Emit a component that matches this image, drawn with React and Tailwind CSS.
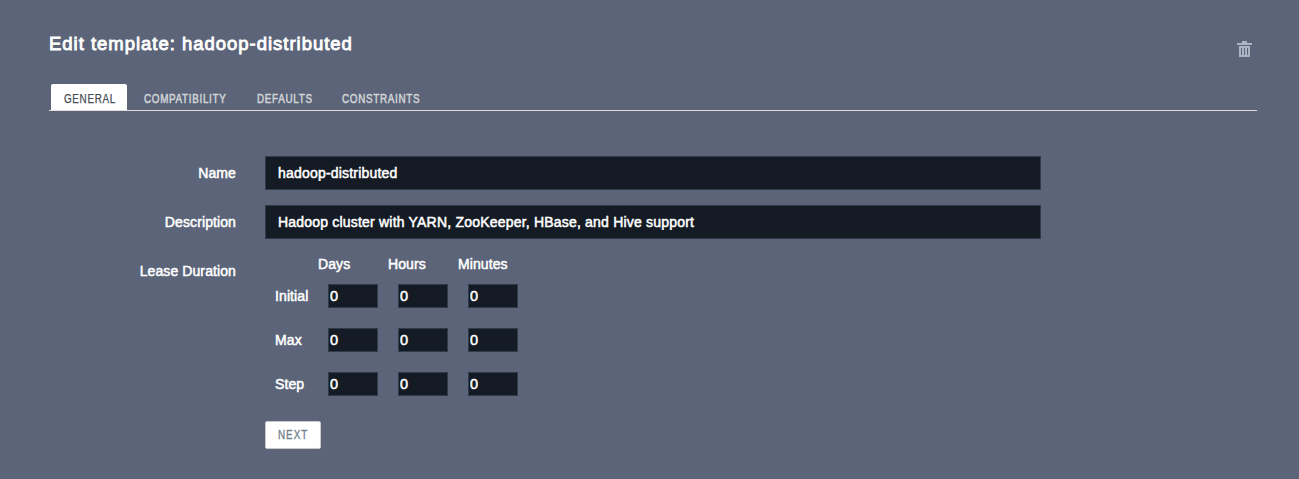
const tabs = [
  { label: "COMPATIBILITY", style: "ml-[17px] w-[83px]" },
  { label: "DEFAULTS", style: "ml-[30px] w-[55px]" },
  { label: "CONSTRAINTS", style: "ml-[30px] w-[77px]" },
];

function Condensed({ children }) {
  return <span className="inline-block origin-left scale-x-[0.82] whitespace-nowrap">{children}</span>;
}

function TrashIcon() {
  return (
    <svg width="15" height="16" viewBox="0 0 15 16" fill="#aab5c1" shapeRendering="crispEdges">
      <path d="M5 0h5v2h5v2H0V2h5z" />
      <path fillRule="evenodd" d="M2 5h11v11H2zM4 7v7h1V7zM7 7v7h1V7zM10 7v7h1V7z" />
    </svg>
  );
}

function Field({ label, value }) {
  return (
    <div className="flex h-[34px] items-center">
      <label className="w-[187px] text-right">{label}</label>
      <input
        defaultValue={value}
        className="ml-[29px] h-[34px] w-[776px] border border-[#303b4a] bg-[#141b24] px-3 tracking-[0.2px] outline-none"
      />
    </div>
  );
}

function LeaseRow({ label }) {
  return (
    <div className="flex h-6 items-center">
      <span className="w-[53px]">{label}</span>
      <div className="flex gap-5">
        {["Days", "Hours", "Minutes"].map((unit) => (
          <input
            key={unit}
            aria-label={`${label} ${unit}`}
            defaultValue="0"
            className="h-6 w-[50px] border border-[#303b4a] bg-[#141b24] px-px text-[14.5px] outline-none [-webkit-text-stroke:0.5px_currentColor]"
          />
        ))}
      </div>
    </div>
  );
}

export default function App() {
  return (
    <main className="h-[479px] overflow-hidden bg-[#5b6478] pl-[49px] pr-[42px] pt-8 font-['Liberation_Sans',Arial,sans-serif] text-[14px] leading-5 tracking-[0.1px] text-white [-webkit-text-stroke:0.5px_currentColor]">
      <header className="flex h-[52px] justify-between">
        <h1 className="text-[18.5px] leading-6 tracking-[0.98px] [-webkit-text-stroke:0.85px_currentColor]">
          Edit template: hadoop-distributed
        </h1>
        <button aria-label="Delete template" className="mr-[5px] mt-[9px] h-4">
          <TrashIcon />
        </button>
      </header>
      <nav className="flex h-[27px] border-b border-[#dedbd9] pl-[2px] text-[12px] leading-[30px] tracking-[0.85px] text-[#d2d5d8]">
        <button className="w-[76px] rounded-t-[2px] bg-white pl-[13px] text-left text-[#454b50] [-webkit-text-stroke:0.25px_currentColor]">
          <Condensed>GENERAL</Condensed>
        </button>
        {tabs.map((tab) => (
          <button key={tab.label} className={`${tab.style} text-left`}>
            <Condensed>{tab.label}</Condensed>
          </button>
        ))}
      </nav>
      <form className="pt-[45px]">
        <div className="flex flex-col gap-[15px]">
          <Field label="Name" value="hadoop-distributed" />
          <Field label="Description" value="Hadoop cluster with YARN, ZooKeeper, HBase, and Hive support" />
        </div>
        <div className="flex pt-[15px]">
          <span className="w-[187px] pt-[7px] text-right">Lease Duration</span>
          <div className="ml-[39px]">
            <div className="flex h-[30px] pl-[43px]">
              <span className="w-[70px]">Days</span>
              <span className="w-[70px]">Hours</span>
              <span>Minutes</span>
            </div>
            <div className="flex flex-col gap-5">
              <LeaseRow label="Initial" />
              <LeaseRow label="Max" />
              <LeaseRow label="Step" />
            </div>
          </div>
        </div>
        <button
          type="button"
          className="ml-[216px] mt-[25px] block h-7 w-14 rounded-[2px] border border-[#c9c9c9] bg-white pl-3 text-left text-[12px] leading-[26px] tracking-[1.2px] text-[#74828c] [-webkit-text-stroke:0.35px_currentColor]"
        >
          <Condensed>NEXT</Condensed>
        </button>
      </form>
    </main>
  );
}
